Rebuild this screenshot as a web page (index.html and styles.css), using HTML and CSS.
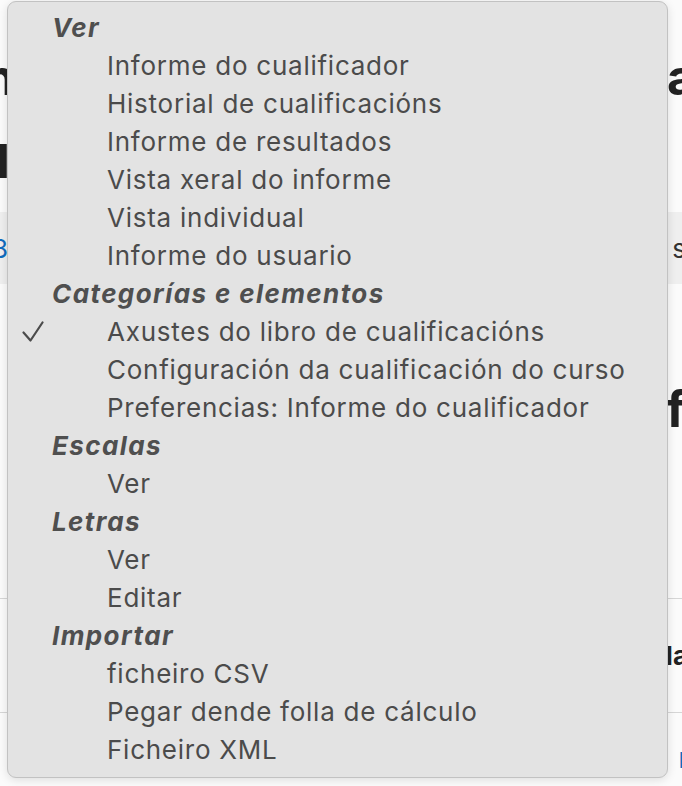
FILE: index.html
```html
<!DOCTYPE html>
<html lang="gl">
<head>
<meta charset="utf-8">
<title>Cualificacións</title>
<link rel="stylesheet" href="styles.css">
</head>
<body>
<div class="page">
  <div class="bg-row bg-title"><span class="cut-l">n</span><span class="cut-r">a</span></div>
  <div class="bg-row bg-sub"><span class="cut-l">u</span><span></span></div>
  <div class="bg-band"><span class="cut-l link">8</span><span class="cut-r band-text">s</span></div>
  <div class="bg-row bg-f"><span></span><span class="cut-r">f</span></div>
  <div class="bg-table">
    <div class="bg-cell"><span></span><span class="cut-r strong">la</span></div>
    <div class="bg-cell last"><span></span><span class="cut-r link small">l</span></div>
  </div>
</div>

<div class="menu" role="listbox">
  <div class="group">Ver</div>
  <div class="item">Informe do cualificador</div>
  <div class="item">Historial de cualificacións</div>
  <div class="item">Informe de resultados</div>
  <div class="item">Vista xeral do informe</div>
  <div class="item">Vista individual</div>
  <div class="item">Informe do usuario</div>
  <div class="group">Categorías e elementos</div>
  <div class="item selected"><svg class="check" width="22" height="22" viewBox="0 0 22 22"><path d="M1.5 11.5 L8.5 19.5 L20.5 1.5" fill="none" stroke="#4b4b4b" stroke-width="2.2" stroke-linecap="round" stroke-linejoin="round"/></svg>Axustes do libro de cualificacións</div>
  <div class="item">Configuración da cualificación do curso</div>
  <div class="item">Preferencias: Informe do cualificador</div>
  <div class="group">Escalas</div>
  <div class="item">Ver</div>
  <div class="group">Letras</div>
  <div class="item">Ver</div>
  <div class="item">Editar</div>
  <div class="group">Importar</div>
  <div class="item">ficheiro CSV</div>
  <div class="item">Pegar dende folla de cálculo</div>
  <div class="item">Ficheiro XML</div>
</div>
</body>
</html>
```

FILE: styles.css
```css
html, body {
  margin: 0;
  padding: 0;
}
body {
  width: 682px;
  height: 786px;
  overflow: hidden;
  background: #fbfbfb;
  font-family: Inter, "Liberation Sans", sans-serif;
  position: relative;
}

.page {
  display: flex;
  flex-direction: column;
  height: 786px;
  overflow: hidden;
}
.bg-row, .bg-band, .bg-cell {
  display: flex;
  justify-content: space-between;
  align-items: center;
  overflow: hidden;
  flex-shrink: 0;
}
.bg-title {
  margin-top: 52px;
  height: 50px;
  font-size: 50px;
  font-weight: 700;
  color: #222;
}
.bg-sub {
  margin-top: 22px;
  height: 62px;
  font-size: 62px;
  font-weight: 700;
  color: #222;
}
.bg-sub .cut-l { margin-left: -28px; }
.cut-l { margin-left: -16px; }
.cut-r { margin-right: -14px; }
.bg-band {
  margin-top: 26px;
  height: 72px;
  background: #efefef;
  font-size: 26px;
}
.bg-band .cut-l { margin-left: -8px; }
.link { color: #0f6cbf; }
.band-text { color: #333; margin-right: -4px; }
.bg-f {
  margin-top: 100px;
  height: 50px;
  font-size: 50px;
  font-weight: 700;
  color: #222;
}
.bg-f .cut-r { margin-right: -4px; }
.bg-table {
  margin-top: 164px;
  border-top: 1px solid #d6d6d6;
  display: flex;
  flex-direction: column;
  flex-shrink: 0;
}
.bg-cell {
  height: 113px;
  border-bottom: 1px solid #d6d6d6;
  font-size: 26px;
}
.bg-cell .strong { font-weight: 700; color: #222; margin-right: -6px; }
.bg-cell.last { height: 60px; border-bottom: none; align-items: flex-end; padding-bottom: 10px; }
.small { font-size: 22px; margin-right: -2px; }

/* native select popup */
.menu {
  position: absolute;
  left: 7px;
  top: 1px;
  width: 661px;
  height: 777px;
  box-sizing: border-box;
  padding-top: 7px;
  background: #e3e3e3;
  border: 1px solid #c2c2c2;
  border-radius: 9px;
  box-shadow: 0 2px 10px rgba(0, 0, 0, 0.12);
  color: #4b4b4b;
  font-size: 26px;
  letter-spacing: 0.75px;
}
.group, .item {
  height: 38px;
  line-height: 38px;
  white-space: nowrap;
}
.group {
  padding-left: 44px;
  font-weight: 700;
  font-style: italic;
  color: #4f4f4f;
  letter-spacing: 1.4px;
}
.item {
  padding-left: 99px;
  position: relative;
}
.check {
  position: absolute;
  left: 14px;
  top: 8px;
}
```
